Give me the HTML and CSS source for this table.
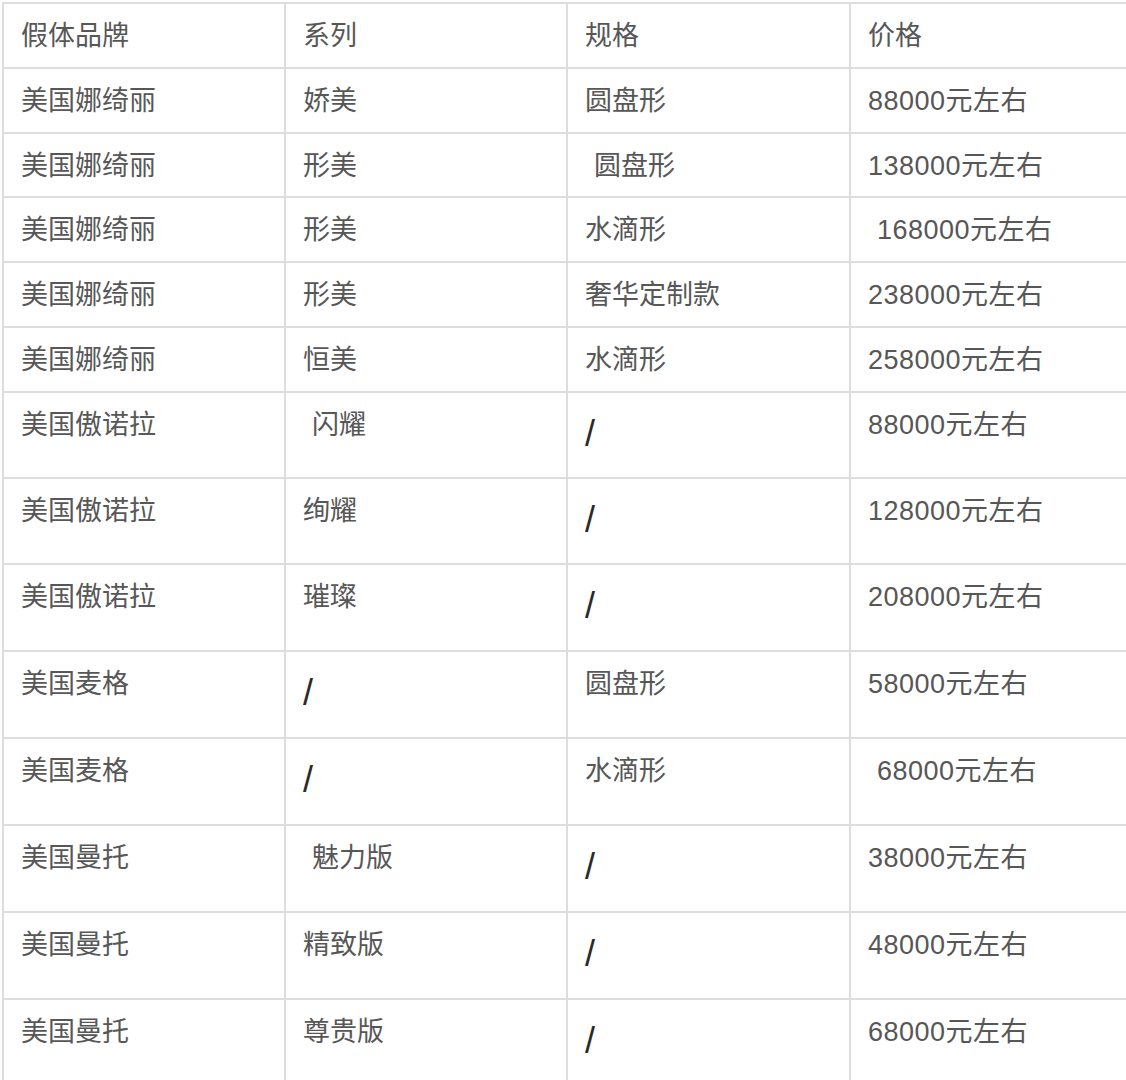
FILE: index.html
```html
<!DOCTYPE html>
<html lang="zh-CN">
<head>
<meta charset="utf-8">
<title>假体品牌价格</title>
<link rel="stylesheet" href="styles.css">
</head>
<body>
<table class="price-table">
  <colgroup>
    <col class="c1"><col class="c2"><col class="c3"><col class="c4">
  </colgroup>
  <tr class="short"><td>假体品牌</td><td>系列</td><td>规格</td><td>价格</td></tr>
  <tr class="short"><td>美国娜绮丽</td><td>娇美</td><td>圆盘形</td><td class="price">88000元左右</td></tr>
  <tr class="short r2"><td>美国娜绮丽</td><td>形美</td><td class="ind">圆盘形</td><td class="price">138000元左右</td></tr>
  <tr class="short"><td>美国娜绮丽</td><td>形美</td><td>水滴形</td><td class="price ind">168000元左右</td></tr>
  <tr class="short"><td>美国娜绮丽</td><td>形美</td><td>奢华定制款</td><td class="price">238000元左右</td></tr>
  <tr class="short"><td>美国娜绮丽</td><td>恒美</td><td>水滴形</td><td class="price">258000元左右</td></tr>
  <tr class="tall t1"><td>美国傲诺拉</td><td class="ind">闪耀</td><td><span class="slash">/</span></td><td class="price">88000元左右</td></tr>
  <tr class="tall t1"><td>美国傲诺拉</td><td>绚耀</td><td><span class="slash">/</span></td><td class="price">128000元左右</td></tr>
  <tr class="tall"><td>美国傲诺拉</td><td>璀璨</td><td><span class="slash">/</span></td><td class="price">208000元左右</td></tr>
  <tr class="tall"><td>美国麦格</td><td><span class="slash">/</span></td><td>圆盘形</td><td class="price">58000元左右</td></tr>
  <tr class="tall"><td>美国麦格</td><td><span class="slash">/</span></td><td>水滴形</td><td class="price ind">68000元左右</td></tr>
  <tr class="tall"><td>美国曼托</td><td class="ind">魅力版</td><td><span class="slash">/</span></td><td class="price">38000元左右</td></tr>
  <tr class="tall"><td>美国曼托</td><td>精致版</td><td><span class="slash">/</span></td><td class="price">48000元左右</td></tr>
  <tr class="tall"><td>美国曼托</td><td>尊贵版</td><td><span class="slash">/</span></td><td class="price">68000元左右</td></tr>
</table>
</body>
</html>
```
FILE: styles.css
```css
html, body {
  margin: 0;
  padding: 0;
  background: #ffffff;
  overflow: hidden;
}

body {
  padding: 2px 0 0 2px;
  font-family: "Liberation Sans", "Noto Sans CJK SC", sans-serif;
  font-size: 27px;
  color: #575757;
}

.price-table {
  border-collapse: separate;
  border-spacing: 0;
  table-layout: fixed;
  width: 1132px;
}

.c1 { width: 282px; }
.c2 { width: 282px; }
.c3 { width: 283px; }
.c4 { width: 285px; }

.price-table td {
  border-top: 2px solid #dddddd;
  border-left: 2px solid #dddddd;
  padding: 12px 0 0 17px;
  vertical-align: top;
  line-height: 40px;
  white-space: nowrap;
}

.price { letter-spacing: 0.5px; }

.short { height: 65px; }
.short.r2 { height: 64px; }
.tall { height: 87px; }
.tall.t1 { height: 86px; }

.ind { text-indent: 9px; }

.slash {
  display: block;
  margin-top: 9px;
  font-family: "Liberation Sans", sans-serif;
  font-size: 36px;
  line-height: 40px;
  color: #2a2a2a;
  text-indent: 0;
}
```
